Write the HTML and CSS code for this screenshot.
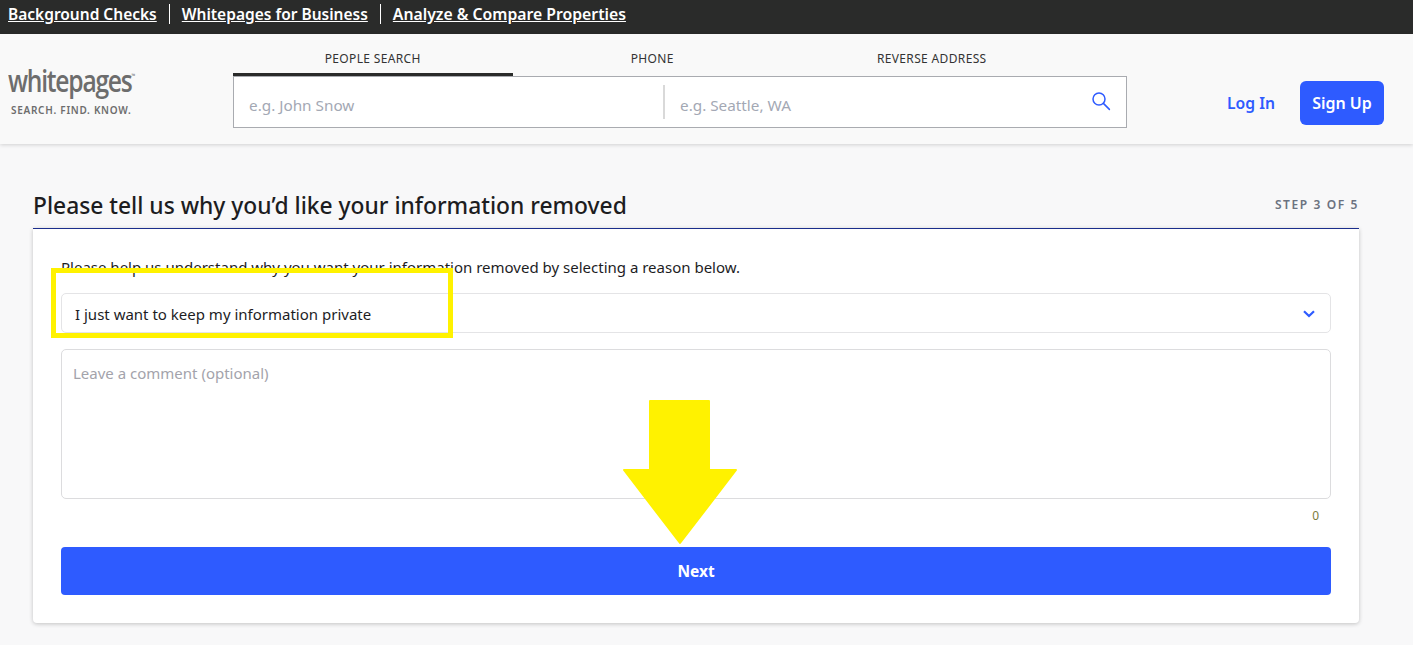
FILE: index.html
```html
<!DOCTYPE html>
<html lang="en">
<head>
<meta charset="utf-8">
<title>Whitepages</title>
<link rel="stylesheet" href="styles.css">
</head>
<body>
<nav class="topbar">
  <a class="toplink" href="#">Background Checks</a>
  <a class="toplink" href="#">Whitepages for Business</a>
  <a class="toplink toplink-wide" href="#">Analyze &amp; Compare Properties</a>
</nav>
<header class="header">
  <div class="logo">
    <div class="logo-word">whitepages<span class="logo-tm">™</span></div>
    <div class="logo-tag">SEARCH. FIND. KNOW.</div>
  </div>
  <div class="search">
    <div class="tabs">
      <div class="tab tab-active">PEOPLE SEARCH</div>
      <div class="tab">PHONE</div>
      <div class="tab">REVERSE ADDRESS</div>
    </div>
    <div class="searchbox">
      <div class="field field-name">e.g. John Snow</div>
      <div class="field-divider"></div>
      <div class="field field-place">e.g. Seattle, WA</div>
      <svg class="search-icon" viewBox="0 0 20 20" width="20" height="20" fill="none" stroke="#2e5bff" stroke-width="1.5" stroke-linecap="round"><circle cx="8" cy="8" r="6"/><path d="M12.4 12.4 L18.4 18.4"/></svg>
    </div>
  </div>
  <div class="auth">
    <a class="login" href="#">Log In</a>
    <a class="signup" href="#">Sign Up</a>
  </div>
</header>
<main class="main">
  <div class="title-row">
    <h1 class="title">Please tell us why you’d like your information removed</h1>
    <div class="step">STEP 3 OF 5</div>
  </div>
  <section class="card">
    <p class="intro">Please help us understand why you want your information removed by selecting a reason below.</p>
    <div class="select">
      <span class="select-value">I just want to keep my information private</span>
      <svg class="chevron" viewBox="0 0 12 8" width="12" height="8" fill="none" stroke="#2e5bff" stroke-width="2.2"><path d="M1 1.2 L6 6 L11 1.2"/></svg>
    </div>
    <div class="textarea">Leave a comment (optional)</div>
    <div class="counter">0</div>
    <button class="next" type="button">Next</button>
  </section>
</main>
<div class="mark-box"></div>
<svg class="mark-arrow" viewBox="0 0 116 146" width="116" height="146"><path fill="#fff200" stroke="#fff200" stroke-width="2" stroke-linejoin="round" d="M28 1 H87 V70 H114 L58 143 L2 70 H28 Z"/></svg>
</body>
</html>
```
FILE: styles.css
```css
* { box-sizing: border-box; }
html, body { margin: 0; padding: 0; }
body {
  position: relative;
  height: 645px;
  overflow: hidden;
  background: #f8f8f9;
  font-family: "Noto Sans", "Open Sans", sans-serif;
  color: #1c1c1c;
}
.topbar {
  height: 34px;
  background: #2a2b2a;
  display: flex;
  align-items: center;
  padding: 0 0 6px 8px;
}
.toplink {
  color: #fff;
  font-size: 15.5px;
  font-weight: 600;
  line-height: 20px;
  text-decoration: underline;
  padding-right: 12px;
  margin-right: 12px;
  border-right: 1px solid #fff;
}
.toplink-wide { border-right: 0; font-size: 15.75px; }
.header {
  height: 110px;
  background: #f9f9f9;
  box-shadow: 0 1px 4px rgba(0,0,0,.16);
  display: flex;
  position: relative;
}
.logo { width: 233px; padding: 25px 0 0 8px; color: #6d6d6d; }
.logo-word {
  font-family: "Open Sans", sans-serif;
  font-weight: 600;
  font-size: 30px;
  line-height: 34px;
  letter-spacing: -1.5px;
  white-space: nowrap;
  transform: scaleX(.82);
  transform-origin: left center;
}
.logo-tm { font-size: 6px; vertical-align: 14px; letter-spacing: 0; }
.logo-tag {
  font-size: 10px;
  font-weight: 600;
  line-height: 12px;
  letter-spacing: .72px;
  padding-left: 3px;
  margin-top: 6px;
}
.search { width: 894px; padding-top: 14px; }
.tabs { display: flex; height: 28px; }
.tab {
  width: 279.5px;
  height: 28px;
  text-align: center;
  font-size: 12px;
  line-height: 21px;
  letter-spacing: .35px;
  color: #333;
}
.tab-active { border-bottom: 3px solid #2a2b2a; }
.searchbox {
  height: 52px;
  background: #fff;
  border: 1px solid #a9abb0;
  display: flex;
  align-items: center;
  font-size: 15.3px;
  color: #a3a8b4;
}
.field { line-height: 20px; padding-top: 6px; }
.field-name { width: 429px; padding-left: 15px; }
.field-divider { width: 2px; height: 34px; background: #d9d9d9; }
.field-place { flex: 1; padding-left: 15px; }
.search-icon { margin: 0 15px 0 0; position: relative; top: -1px; }
.auth { flex: 1; display: flex; align-items: center; justify-content: flex-end; padding: 28px 29px 0 0; }
.login { color: #2e5bff; font-size: 15.7px; font-weight: 600; text-decoration: none; margin-right: 25px; }
.signup {
  width: 84px;
  height: 44px;
  background: #2e5bff;
  border-radius: 6px;
  color: #fff;
  font-size: 16px;
  font-weight: 600;
  text-decoration: none;
  display: flex;
  align-items: center;
  justify-content: center;
}
.main { padding: 0 54px 0 33px; }
.title-row {
  height: 84px;
  display: flex;
  justify-content: space-between;
  padding-top: 45px;
}
.title { margin: 0; font-size: 22.8px; font-weight: 500; line-height: 34px; color: #1d1d1f; }
.step {
  font-size: 12px;
  font-weight: 600;
  letter-spacing: 1.6px;
  color: #6b7280;
  line-height: 16px;
  padding-top: 8px;
}
.card {
  height: 395px;
  background: #fff;
  border-top: 1px solid #1b2e8c;
  border-radius: 0 0 4px 4px;
  box-shadow: 0 1px 4px rgba(0,0,0,.22);
  padding: 28px 28px 0;
}
.intro { margin: 0; font-size: 15px; line-height: 20px; color: #1d1d1f; }
.select {
  margin-top: 16px;
  height: 40px;
  border: 1px solid #e4e4e6;
  border-radius: 5px;
  display: flex;
  align-items: center;
  justify-content: space-between;
  padding: 1px 15px 0 13px;
  font-size: 15px;
  color: #1d1d1f;
}
.select-value { line-height: 20px; }
.chevron { display: block; }
.textarea {
  margin-top: 16px;
  height: 150px;
  border: 1px solid #dcdcde;
  border-radius: 5px;
  padding: 13px 11px;
  font-size: 15px;
  line-height: 20px;
  color: #a3a3ab;
}
.counter {
  height: 48px;
  padding: 10px 12px 0 0;
  text-align: right;
  font-size: 12px;
  line-height: 14px;
  color: #7c7c3c;
}
.next {
  display: block;
  width: 100%;
  height: 48px;
  border: 0;
  border-radius: 4px;
  background: #2e5bff;
  color: #fff;
  font-family: inherit;
  font-size: 15.5px;
  font-weight: 700;
}
.mark-box {
  position: absolute;
  left: 51px;
  top: 268px;
  width: 402px;
  height: 70px;
  border: 5px solid #fff200;
}
.mark-arrow {
  position: absolute;
  left: 622px;
  top: 400px;
}
```
